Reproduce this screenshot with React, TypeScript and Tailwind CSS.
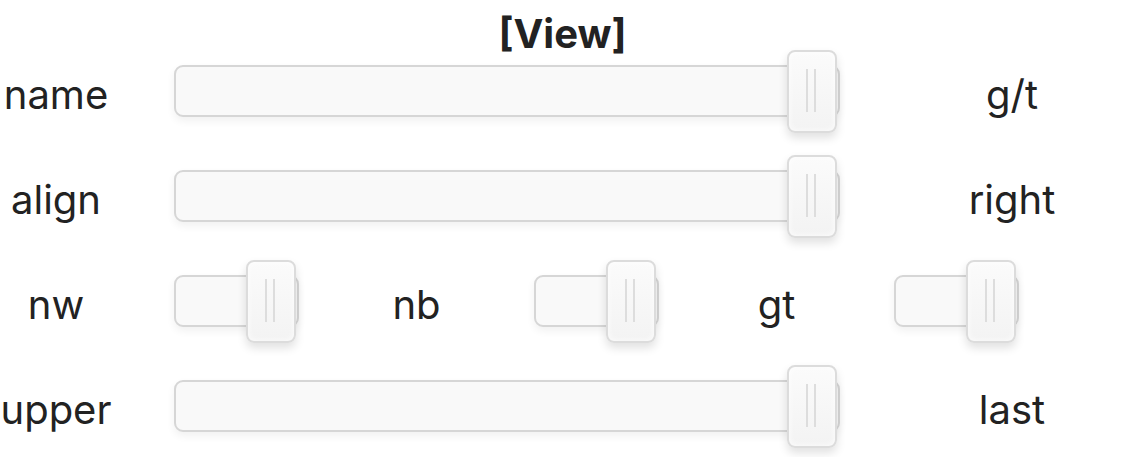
import React from "react";

function Slider({ width }: { width: number }) {
  return (
    <div className="relative h-[52px] shrink-0" style={{ width }}>
      <div className="absolute inset-0 rounded-[9px] border-2 border-[#d6d6d6] bg-[#f9f9f9] shadow-[0_4px_8px_rgba(0,0,0,0.06)]" />
      <div className="absolute right-[3px] top-[-15px] h-[83px] w-[50px] rounded-[8px] border-2 border-[#dcdcdc] bg-gradient-to-b from-[#fbfbfb] to-[#f3f3f3] shadow-[0_5px_10px_rgba(0,0,0,0.12),inset_0_0_6px_rgba(255,255,255,0.9)]">
        <div className="absolute left-[17px] top-[17px] h-[43px] w-[2px] bg-[#dddddd]" />
        <div className="absolute left-[25px] top-[17px] h-[43px] w-[2px] bg-[#dddddd]" />
      </div>
    </div>
  );
}

const font = { fontFamily: "Inter, 'Noto Sans', sans-serif" };

export default function App() {
  return (
    <div className="h-[457px] w-[1125px] overflow-hidden bg-white text-[#222222]" style={font}>
      <div className="h-[38px] text-center">
        <div className="pt-[14px] text-[40px] font-bold leading-[40px]">[View]</div>
      </div>
      {/* row 1 */}
      <div className="flex h-[105px] items-center text-[40px] leading-[48px]">
        <div className="w-[112px] pt-[8px] text-center">name</div>
        <div className="ml-[62px]">
          <Slider width={666} />
        </div>
        <div className="ml-[100px] w-[144px] pt-[8px] text-center">g/t</div>
      </div>
      {/* row 2 */}
      <div className="flex h-[105px] items-center text-[40px] leading-[48px]">
        <div className="w-[112px] pt-[8px] text-center">align</div>
        <div className="ml-[62px]">
          <Slider width={666} />
        </div>
        <div className="ml-[100px] w-[144px] pt-[8px] text-center">right</div>
      </div>
      {/* row 3 */}
      <div className="flex h-[105px] items-center text-[40px] leading-[48px]">
        <div className="w-[112px] pt-[8px] text-center">nw</div>
        <div className="ml-[62px]">
          <Slider width={125} />
        </div>
        <div className="w-[235px] pt-[8px] text-center">nb</div>
        <Slider width={125} />
        <div className="w-[235px] pt-[8px] text-center">gt</div>
        <Slider width={125} />
      </div>
      {/* row 4 */}
      <div className="flex h-[105px] items-center text-[40px] leading-[48px]">
        <div className="w-[112px] pt-[8px] text-center">upper</div>
        <div className="ml-[62px]">
          <Slider width={666} />
        </div>
        <div className="ml-[100px] w-[144px] pt-[8px] text-center">last</div>
      </div>
    </div>
  );
}
